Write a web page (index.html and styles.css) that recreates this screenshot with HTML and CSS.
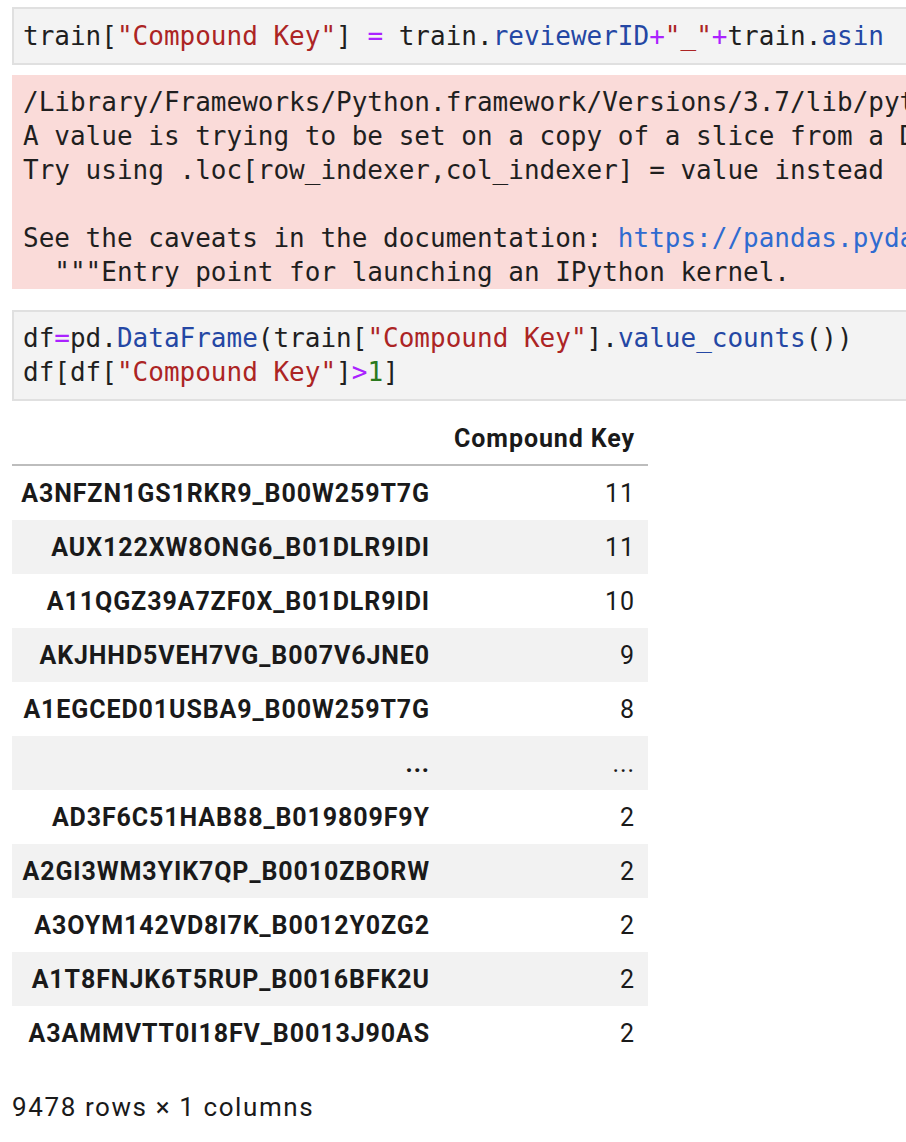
FILE: index.html
```html
<!DOCTYPE html>
<html>
<head>
<meta charset="utf-8">
<link rel="stylesheet" href="styles.css">
</head>
<body>
<div class="nb">
  <div class="cell code">
    <div class="line">train[<span class="s">"Compound Key"</span>] <span class="o">=</span> train.<span class="p">reviewerID</span><span class="o">+</span><span class="s">"_"</span><span class="o">+</span>train.<span class="p">asin</span></div>
  </div>
  <div class="stderr">
    <div class="line">/Library/Frameworks/Python.framework/Versions/3.7/lib/python3.7/site-packages/ipykernel_launcher.py:1: SettingWithCopyWarning:</div>
    <div class="line">A value is trying to be set on a copy of a slice from a DataFrame.</div>
    <div class="line">Try using .loc[row_indexer,col_indexer] = value instead</div>
    <div class="line">&nbsp;</div>
    <div class="line">See the caveats in the documentation: <span class="link">https://pandas.pydata.org/pandas-docs/stable/user_guide/indexing.html</span></div>
    <div class="line">  """Entry point for launching an IPython kernel.</div>
  </div>
  <div class="cell code second">
    <div class="line">df<span class="o">=</span>pd.<span class="p">DataFrame</span>(train[<span class="s">"Compound Key"</span>].<span class="p">value_counts</span>())</div>
    <div class="line">df[df[<span class="s">"Compound Key"</span>]<span class="o">&gt;</span><span class="n">1</span>]</div>
  </div>
  <table class="df">
    <colgroup><col class="c-idx"><col class="c-val"></colgroup>
    <thead>
      <tr><th class="idx"></th><th class="val">Compound Key</th></tr>
    </thead>
    <tbody>
      <tr><th class="idx">A3NFZN1GS1RKR9_B00W259T7G</th><td class="val">11</td></tr>
      <tr><th class="idx">AUX122XW8ONG6_B01DLR9IDI</th><td class="val">11</td></tr>
      <tr><th class="idx">A11QGZ39A7ZF0X_B01DLR9IDI</th><td class="val">10</td></tr>
      <tr><th class="idx">AKJHHD5VEH7VG_B007V6JNE0</th><td class="val">9</td></tr>
      <tr><th class="idx">A1EGCED01USBA9_B00W259T7G</th><td class="val">8</td></tr>
      <tr><th class="idx">...</th><td class="val">...</td></tr>
      <tr><th class="idx">AD3F6C51HAB88_B019809F9Y</th><td class="val">2</td></tr>
      <tr><th class="idx">A2GI3WM3YIK7QP_B0010ZBORW</th><td class="val">2</td></tr>
      <tr><th class="idx">A3OYM142VD8I7K_B0012Y0ZG2</th><td class="val">2</td></tr>
      <tr><th class="idx">A1T8FNJK6T5RUP_B0016BFK2U</th><td class="val">2</td></tr>
      <tr><th class="idx">A3AMMVTT0I18FV_B0013J90AS</th><td class="val">2</td></tr>
    </tbody>
  </table>
  <div class="footer">9478 rows × 1 columns</div>
</div>
</body>
</html>
```

FILE: styles.css
```css
html, body {
  margin: 0;
  padding: 0;
  background: #ffffff;
  overflow: hidden;
}
.nb {
  padding: 7px 0 0 12px;
  width: 1400px;
}
.line {
  font-family: "DejaVu Sans Mono", monospace;
  font-size: 26px;
  line-height: 34px;
  height: 34px;
  white-space: pre;
  color: #1f1f1f;
}
.cell {
  background: #f3f3f3;
  border: 2px solid #e0e0e0;
  padding: 10px 9px;
}
.second {
  margin-top: 21px;
  padding: 9px 9px 10px;
}
.stderr {
  margin-top: 10px;
  background: #fadbd9;
  padding: 10px 11px 0;
}
.s { color: #ac2424; }
.o { color: #aa22ff; }
.p { color: #2447a4; }
.n { color: #2a7a1e; }
.link { color: #2f6bd0; }

.df {
  margin-top: 11px;
  border-collapse: collapse;
  table-layout: fixed;
  width: 636px;
  font-family: Roboto, "Liberation Sans", sans-serif;
  font-size: 25px;
  letter-spacing: 0.9px;
  color: #1a1a1a;
}
.c-idx { width: 431px; }
.c-val { width: 205px; }
.df th, .df td {
  height: 54px;
  padding: 0 13px 0 0;
  text-align: right;
  vertical-align: middle;
  white-space: nowrap;
  overflow: visible;
}
.df th { font-weight: 700; }
.df td { font-weight: 400; }
.df thead tr { border-bottom: 2px solid #bdbdbd; }
.df thead th { height: 52px; }
.df tbody tr:nth-child(even) { background: #f2f2f2; }
.df tbody tr th, .df tbody tr td { height: 54px; }
.footer {
  font-family: Roboto, "Liberation Sans", sans-serif;
  font-size: 26px;
  letter-spacing: 1.6px;
  color: #1a1a1a;
  margin-top: 32px;
  line-height: 30px;
}
```
